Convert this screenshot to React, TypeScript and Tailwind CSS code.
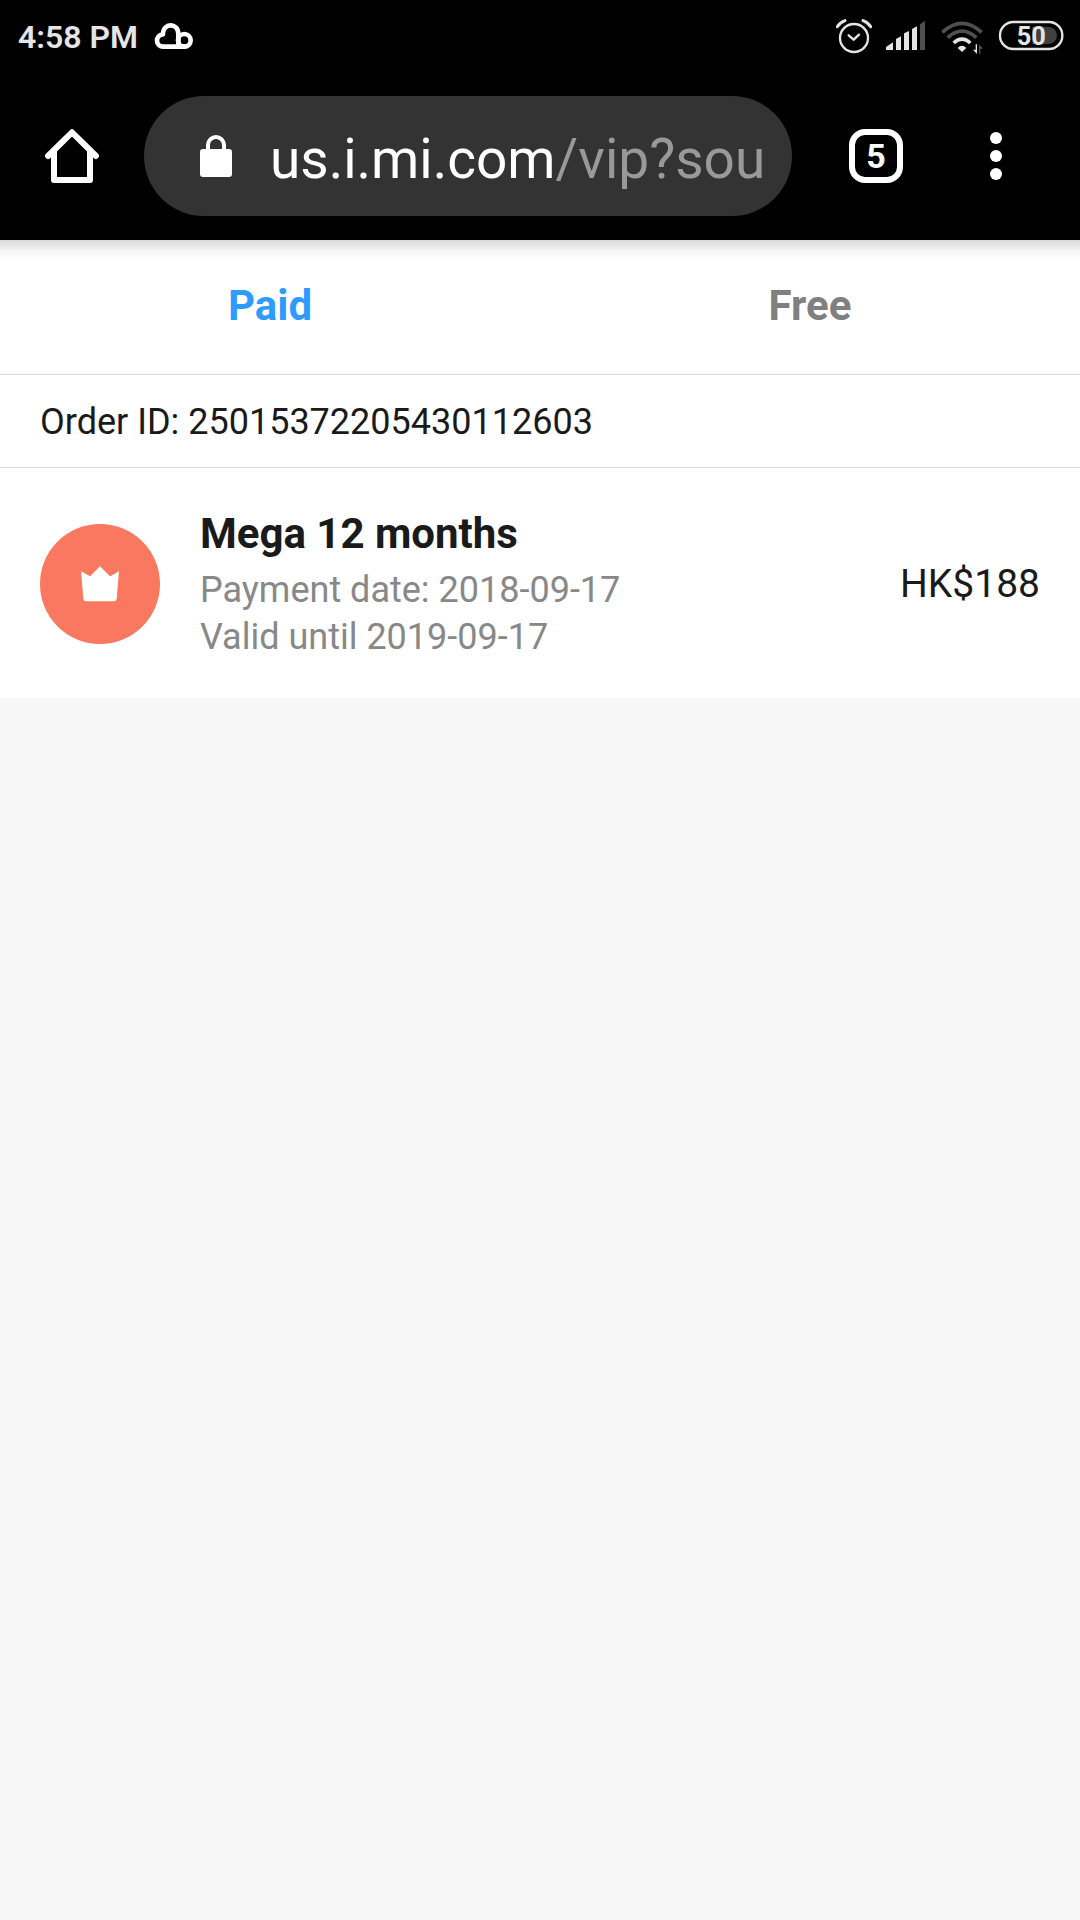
import { useState } from 'react';
import clsx from 'clsx';

interface Order {
  id: string;
  plan: string;
  paidOn: string;
  validUntil: string;
  price: string;
}

const TABS = ['Paid', 'Free'] as const;
type Tab = (typeof TABS)[number];

const ORDERS: Record<Tab, Order[]> = {
  Paid: [
    {
      id: '25015372205430112603',
      plan: 'Mega 12 months',
      paidOn: '2018-09-17',
      validUntil: '2019-09-17',
      price: 'HK$188',
    },
  ],
  Free: [],
};

function CloudIcon() {
  return (
    <svg className="h-7 w-10" viewBox="462 62 120 84" fill="none" stroke="#fff" strokeWidth="14">
      <path
        d="M553 136H490A18 18 0 0 1 489 99C489 64 534 63 535 97V136"
        strokeLinecap="round"
        strokeLinejoin="round"
      />
      <circle cx="553" cy="117" r="19" />
    </svg>
  );
}

function AlarmIcon() {
  return (
    <svg className="size-9" viewBox="48 54 108 108" fill="none" stroke="#e5e5e5">
      <circle cx="102" cy="114" r="42" strokeWidth="7" />
      <path d="M86 106L101 119L117 104" strokeWidth="7" strokeLinecap="round" />
      <path d="M52 80Q61 67 75 62M152 80Q143 67 129 62" strokeWidth="9" strokeLinecap="round" />
    </svg>
  );
}

function SignalIcon() {
  return (
    <svg className="h-9 w-10" viewBox="198 54 120 108" fill="#e5e5e5">
      <path d="M198 150V141L219 127V150ZM228 150V117L243 109V150ZM252 150V100L267 93V150ZM276 150V87L291 79V150Z" />
      <path d="M300 150V73L315 63V150Z" fill="#505050" />
    </svg>
  );
}

function WifiIcon() {
  return (
    <svg className="h-9 w-11" viewBox="360 54 132 108" fill="none" strokeWidth="11">
      <path d="M367 97Q426 43 485 97" stroke="#505050" />
      <path d="M383 113Q426 74 469 113" stroke="#505050" />
      <path d="M401 129Q426 106 451 129" stroke="#e5e5e5" />
      <path d="M413 144Q426 131 439 144L426 156Z" fill="#e5e5e5" />
      <path d="M471 133V162L459 149H467V133Z" fill="#e5e5e5" />
      <path d="M477 162V133L489 146H481V162Z" fill="#505050" />
    </svg>
  );
}

function BatteryIcon() {
  return (
    <svg className="h-9 w-[66px]" viewBox="534 54 198 108">
      <rect x="540" y="66" width="187" height="81" rx="40" fill="none" stroke="#e5e5e5" strokeWidth="7" />
      <path d="M637 80H685A26 26 0 0 1 685 132H637Z" fill="#404040" />
      <text x="634" y="134" textAnchor="middle" fontSize="76" fontWeight="700" fill="#e5e5e5">
        50
      </text>
    </svg>
  );
}

function StatusBar() {
  return (
    <div className="flex h-[72px] items-center justify-between pr-4 pl-[18px] text-[#e5e5e5]">
      <div className="flex items-center gap-4">
        <span className="pt-0.5 text-[32px] leading-none font-semibold">4:58 PM</span>
        <CloudIcon />
      </div>
      <div className="flex items-center gap-[14px]">
        <AlarmIcon />
        <SignalIcon />
        <WifiIcon />
        <BatteryIcon />
      </div>
    </div>
  );
}

function BrowserBar() {
  return (
    <div className="flex h-[168px] items-center pr-12">
      <button type="button" aria-label="Home" className="flex w-36 shrink-0 justify-center">
        <svg className="size-[54px]" viewBox="0 0 54 54" fill="none" stroke="#fff" strokeWidth="6">
          <path d="M9 22V51H45V22" strokeLinejoin="round" />
          <path d="M3 27L27 3.3L51 27" strokeLinecap="round" strokeLinejoin="round" />
        </svg>
      </button>
      <a
        href="#"
        className="flex h-[120px] min-w-0 flex-1 items-center gap-[38px] rounded-full bg-[#333] pr-6 pl-14"
      >
        <svg className="h-[42px] w-8 shrink-0" viewBox="0 0 32 42" fill="#fff">
          <rect y="14" width="32" height="28" rx="3" />
          <path d="M8 16V10A8 8 0 0 1 24 10V16" fill="none" stroke="#fff" strokeWidth="4" />
        </svg>
        <span className="overflow-hidden pt-1.5 text-[55px] leading-[72px] whitespace-nowrap text-white">
          us.i.mi.com<span className="text-[#999]">/vip?sou</span>
        </span>
      </a>
      <button type="button" aria-label="Switch tabs" className="flex w-[168px] shrink-0 justify-center">
        <span className="flex size-[54px] items-center justify-center rounded-2xl border-6 border-white text-[34px] leading-none font-bold text-white">
          5
        </span>
      </button>
      <button type="button" aria-label="More options" className="flex w-[72px] shrink-0 justify-center">
        <svg className="h-12 w-3" viewBox="0 0 12 48" fill="#fff">
          <circle cx="6" cy="6" r="6" />
          <circle cx="6" cy="24" r="6" />
          <circle cx="6" cy="42" r="6" />
        </svg>
      </button>
    </div>
  );
}

function OrderCard({ order }: { order: Order }) {
  return (
    <article className="bg-white text-[#1a1a1a]">
      <p className="border-b border-[#d9d9d9] px-10 pt-[23px] pb-[21px] text-4xl leading-[48px]">
        Order ID: {order.id}
      </p>
      <div className="flex items-center gap-10 px-10 pt-[39px] pb-[37px]">
        <div className="flex size-[120px] shrink-0 items-center justify-center rounded-full bg-[#fb7860]">
          <svg className="h-9 w-[38px]" viewBox="243 320 114 108" fill="#fff">
            <path d="M243 336L270 351L300 321L330 351L357 336L350 419Q349 426 342 426H258Q251 426 250 419Z" />
          </svg>
        </div>
        <div className="flex-1">
          <h2 className="mb-1.5 text-[42px] leading-[54px] font-bold">{order.plan}</h2>
          <p className="text-4xl leading-[47px] text-[#888]">Payment date: {order.paidOn}</p>
          <p className="text-4xl leading-[47px] text-[#888]">Valid until {order.validUntil}</p>
        </div>
        <span className="text-[39px] leading-[56px]">{order.price}</span>
      </div>
    </article>
  );
}

export default function App() {
  const [tab, setTab] = useState<Tab>('Paid');

  return (
    <div className="min-h-screen bg-[#f7f7f7] font-[Roboto,sans-serif]">
      <header className="relative bg-black">
        <StatusBar />
        <BrowserBar />
        {/* Toolbar shadow over the page */}
        <div className="pointer-events-none absolute inset-x-0 top-full h-5 bg-linear-to-b from-black/15 via-black/5 to-transparent" />
      </header>

      <main>
        <div role="tablist" className="flex border-b border-[#d9d9d9] bg-white">
          {TABS.map((name) => (
            <button
              key={name}
              type="button"
              role="tab"
              aria-selected={tab === name}
              onClick={() => setTab(name)}
              className={clsx(
                'flex-1 pt-[38px] pb-10 text-[42px] leading-[56px] font-bold',
                tab === name ? 'text-[#2e9bff]' : 'text-[#808080]',
              )}
            >
              {name}
            </button>
          ))}
        </div>
        {ORDERS[tab].map((order) => (
          <OrderCard key={order.id} order={order} />
        ))}
      </main>
    </div>
  );
}
